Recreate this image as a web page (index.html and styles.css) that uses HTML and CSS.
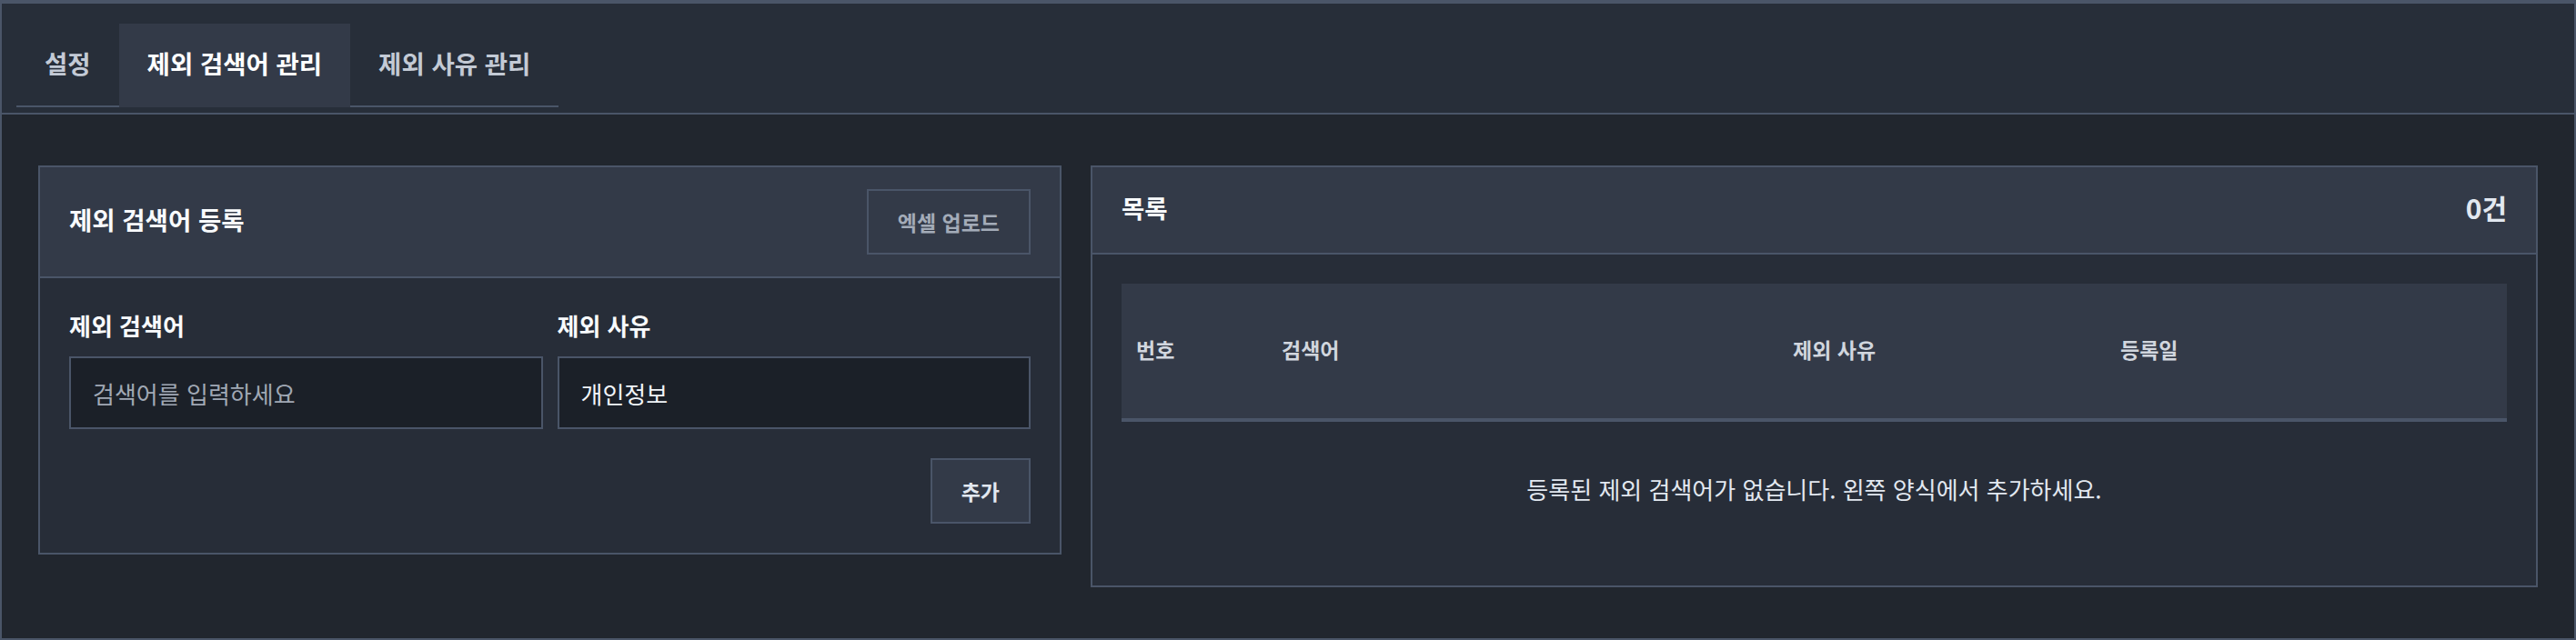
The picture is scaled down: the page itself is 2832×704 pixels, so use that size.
FILE: index.html
```html
<!DOCTYPE html>
<html lang="ko">
<head>
    <meta charset="UTF-8">
    <meta name="viewport" content="width=device-width, initial-scale=1.0"/>
    <title>제외 검색어 관리</title>
    <link rel="stylesheet" href="styles.css">
</head>
<body>
<div class="g-app">
    <div class="g-tab-hd">
        <ul class="m-tab-list">
            <li>설정</li>
            <li class="active">제외 검색어 관리</li>
            <li>제외 사유 관리</li>
        </ul>
    </div>
    <div class="g-content">
        <section class="m-panel">
            <div class="m-panel-hd">
                <h2>제외 검색어 등록</h2>
                <button class="u-btn u-btn-ghost">엑셀 업로드</button>
            </div>
            <div class="m-panel-bd">
                <div class="m-form-row">
                    <div class="m-field">
                        <label for="j-keyword">제외 검색어</label>
                        <input id="j-keyword" type="text" placeholder="검색어를 입력하세요">
                    </div>
                    <div class="m-field">
                        <label for="j-reason">제외 사유</label>
                        <input id="j-reason" type="text" value="개인정보">
                    </div>
                </div>
                <div class="m-form-act">
                    <button class="u-btn">추가</button>
                </div>
            </div>
        </section>
        <section class="m-panel">
            <div class="m-panel-hd">
                <h2>목록</h2>
                <span class="m-count">0건</span>
            </div>
            <div class="m-panel-bd">
                <table class="m-table">
                    <colgroup>
                        <col class="c-no">
                        <col class="c-word">
                        <col class="c-reason">
                        <col>
                    </colgroup>
                    <thead>
                        <tr>
                            <th>번호</th>
                            <th>검색어</th>
                            <th>제외 사유</th>
                            <th>등록일</th>
                        </tr>
                    </thead>
                    <tbody>
                        <tr>
                            <td class="empty" colspan="4">등록된 제외 검색어가 없습니다. 왼쪽 양식에서 추가하세요.</td>
                        </tr>
                    </tbody>
                </table>
            </div>
        </section>
    </div>
</div>
</body>
</html>
```

FILE: styles.css
```css
* {
    margin: 0;
    padding: 0;
    box-sizing: border-box;
}
html, body {
    height: 100%;
}
body {
    font-family: "Noto Sans CJK KR", "Noto Sans", sans-serif;
    background-color: #21262e;
    color: #f1f5f9;
}
ul {
    list-style: none;
}
.g-app {
    display: flex;
    flex-direction: column;
    height: 100%;
    border: 2px solid #4a5568;
    border-top-width: 4px;
}
.g-tab-hd {
    padding: 22px 16px 6px;
    background-color: #272e39;
    border-bottom: 2px solid #4a5568;
}
.m-tab-list {
    display: flex;
}
.m-tab-list>li {
    padding: 24px 31px 28px;
    font-size: 27.5px;
    line-height: 38px;
    font-weight: 700;
    color: #c3cad5;
    border-bottom: 2px solid #4a5568;
}
.m-tab-list>li.active {
    color: #fff;
    background-color: #333a48;
    border-bottom-color: #333a48;
}
.g-content {
    flex: 1;
    display: grid;
    grid-template-columns: 1125px 1fr;
    gap: 32px;
    align-items: start;
    padding: 56px 40px;
    background-color: #21262e;
}
.m-panel {
    border: 2px solid #4a5568;
    background-color: #272d38;
}
.m-panel-hd {
    display: flex;
    justify-content: space-between;
    align-items: center;
    padding: 24px 32px;
    background-color: #333a48;
    border-bottom: 2px solid #4a5568;
}
.m-panel-hd h2 {
    padding-bottom: 6px;
    font-size: 27.5px;
    line-height: 40px;
    font-weight: 700;
    color: #f8fafc;
}
.m-count {
    padding-bottom: 6px;
    font-size: 30px;
    line-height: 40px;
    font-weight: 700;
    color: #e2e8f0;
}
.m-panel-bd {
    padding: 32px;
}
.u-btn {
    font-family: inherit;
    font-size: 23px;
    line-height: 32px;
    font-weight: 600;
    padding: 18px 32px;
    color: #e2e8f0;
    background-color: #333a48;
    border: 2px solid #4a5568;
}
.u-btn-ghost {
    color: #a3abb8;
    background-color: transparent;
}
.m-form-row {
    display: grid;
    grid-template-columns: 1fr 1fr;
    gap: 16px;
}
.m-field label {
    display: block;
    margin-bottom: 14px;
    font-size: 26px;
    line-height: 40px;
    font-weight: 700;
    color: #f8fafc;
}
.m-field input {
    display: block;
    width: 100%;
    height: 80px;
    padding: 0 24px;
    font-family: inherit;
    font-size: 26px;
    color: #f1f5f9;
    background-color: #1b2028;
    border: 2px solid #4a5568;
    outline: none;
}
.m-field input::placeholder {
    color: #a0a8b4;
}
.m-form-act {
    display: flex;
    justify-content: flex-end;
    margin-top: 32px;
}
.m-table {
    width: 100%;
    border-collapse: collapse;
}
.m-table .c-no {
    width: 160px;
}
.m-table .c-word {
    width: 562px;
}
.m-table .c-reason {
    width: 360px;
}
.m-table th {
    padding: 54px 16px 58px;
    font-size: 23px;
    line-height: 36px;
    font-weight: 600;
    text-align: left;
    color: #d1d6de;
    background-color: #333a48;
    border-bottom: 4px solid #4a5568;
}
.m-table td.empty {
    padding: 56px 16px;
    font-size: 26px;
    line-height: 36px;
    text-align: center;
    color: #e2e8f0;
}
```
